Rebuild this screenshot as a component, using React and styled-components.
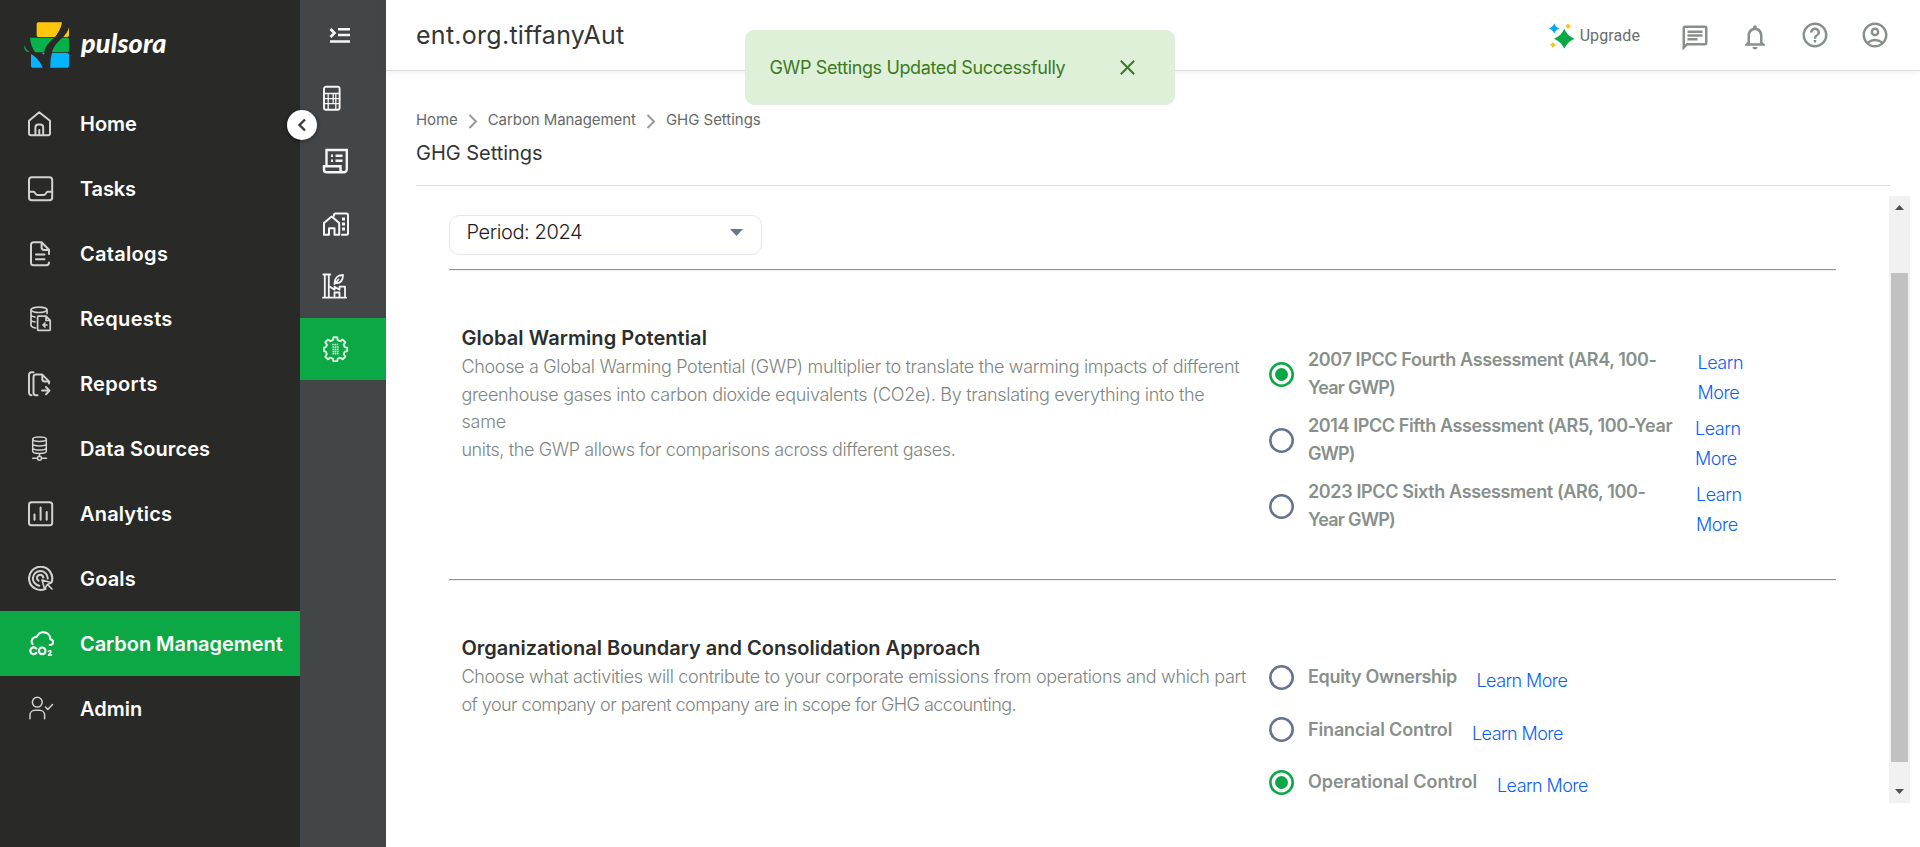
import React from "react";
import styled, { createGlobalStyle } from "styled-components";
import { MdOutlineChat, MdNotificationsNone, MdHelpOutline, MdOutlineAccountCircle } from "react-icons/md";

const Global = createGlobalStyle`
  *, *::before, *::after { box-sizing: border-box; }
  html, body { margin: 0; padding: 0; background: #fff; overflow: hidden; }
  body { font-family: Inter, "Liberation Sans", sans-serif; color: #2f3230; }
  h1, h2, h3, p { margin: 0; }
`;

const Page = styled.div`
  position: relative;
  display: flex;
  width: 1920px;
  height: 847px;
  overflow: hidden;
`;

const Sidebar = styled.aside`
  width: 300px;
  flex: none;
  background: #292927;
`;

const Brand = styled.div`
  display: flex;
  align-items: flex-start;
  height: 91px;
  padding: 21px 0 0 23px;
`;

const Wordmark = styled.span`
  margin: 4px 0 0 12px;
  font: italic 900 27px/36px Lato, sans-serif;
  letter-spacing: 0.15px;
  color: #fff;
`;

const NavItem = styled.a`
  display: flex;
  align-items: center;
  gap: 26px;
  height: 65px;
  padding-left: 28px;
  background: ${(p) => (p.$active ? "#0ca846" : "transparent")};
  color: ${(p) => (p.$active ? "#fff" : "#d2d2d1")};
  svg { flex: none; }
`;

const NavLabel = styled.span`
  color: #fff;
  font-weight: 600;
  font-size: 20px;
  line-height: 30px;
  white-space: nowrap;
  letter-spacing: ${(p) => p.$ls || 0}px;
`;

const Rail = styled.nav`
  width: 86px;
  flex: none;
  background: #434648;
  color: #f6f6f6;
`;

const RailTop = styled.div`
  height: 67px;
  padding: 25px 0 0 29px;
`;

const RailItem = styled.div`
  display: flex;
  align-items: center;
  height: 62.7px;
  padding-left: 22px;
  background: ${(p) => (p.$active ? "#0ca846" : "transparent")};
  color: ${(p) => (p.$active ? "#d3f0dd" : "inherit")};
`;

const Collapse = styled.button`
  position: absolute;
  left: 287px;
  top: 110px;
  width: 30px;
  height: 30px;
  padding: 0;
  border: 0;
  border-radius: 50%;
  background: #fff;
  box-shadow: 0 1px 4px rgba(0, 0, 0, 0.45);
  display: grid;
  place-items: center;
`;

const Main = styled.main`
  flex: 1;
  min-width: 0;
`;

const Header = styled.header`
  display: flex;
  align-items: flex-start;
  justify-content: space-between;
  height: 71px;
  padding: 0 30px;
  border-bottom: 1px solid #dcdce0;
  box-shadow: 0 2px 6px rgba(60, 60, 80, 0.07);
`;

const OrgName = styled.h1`
  padding-top: 17px;
  font-weight: 400;
  font-size: 25px;
  line-height: 36px;
  letter-spacing: 0.27px;
  color: #333634;
`;

const HeaderTools = styled.div`
  display: flex;
  align-items: flex-start;
  gap: 30px;
  padding-top: 20px;
  color: #87908b;
`;

const Upgrade = styled.div`
  display: flex;
  align-items: center;
  gap: 5px;
  margin-right: 10px;
  font: 400 16px/30px Roboto, sans-serif;
  letter-spacing: 0.1px;
  color: #6b6d6c;
  span { padding-top: 1px; }
`;

const ToolIcon = styled.span`
  display: flex;
  width: 30px;
  height: 30px;
  margin-top: ${(p) => p.$drop || 0}px;
`;

const Crumbs = styled.div`
  display: flex;
  align-items: center;
  height: 24px;
  margin: 37px 0 0 30px;
  font-size: 15px;
  line-height: 24px;
  color: #66696b;
  svg { margin: 2px 9.5px 0 10.5px; }
`;

const Crumb = styled.span`
  letter-spacing: ${(p) => p.$ls || 0}px;
  white-space: nowrap;
`;

const PageTitle = styled.h2`
  margin: 6px 0 0 30px;
  font-weight: 400;
  font-size: 20px;
  line-height: 30px;
  letter-spacing: -0.03px;
  color: #333634;
`;

const Divider = styled.div`
  width: 1474px;
  height: 1px;
  margin: 17px 0 10px 30px;
  background: #dddddd;
`;

const Body = styled.div`
  display: flex;
  height: 607px;
`;

const Content = styled.div`
  width: 1387px;
  margin: 19px 53px 0 63px;
  flex: none;
`;

const Select = styled.div`
  display: flex;
  justify-content: space-between;
  width: 313px;
  height: 40px;
  margin-bottom: 14px;
  padding: 1px 18px 0 16.5px;
  border: 1px solid #e6e6ee;
  border-radius: 10px;
  font-size: 20px;
  font-weight: 300;
  line-height: 30px;
  letter-spacing: -0.4px;
  color: #1d201f;
  svg { margin-top: 12px; }
`;

const Rule = styled.div`
  height: 2px;
  border-top: 1px solid #939393;
  border-bottom: 1px solid #eeeeee;
`;

const Section = styled.section`
  display: flex;
  height: ${(p) => p.$h || 220}px;
  padding-left: 12.4px;
`;

const Copy = styled.div`
  width: 807.6px;
  padding-top: 52px;
  flex: none;
`;

const Heading = styled.h3`
  font-weight: 600;
  font-size: 20px;
  line-height: 30px;
  letter-spacing: ${(p) => p.$ls || 0}px;
  color: #2b2e2c;
`;

const Line = styled.p`
  font-size: 18px;
  line-height: 27.7px;
  font-weight: 300;
  white-space: nowrap;
  letter-spacing: ${(p) => p.$ls || 0}px;
  color: #7d8580;
`;

const Options = styled.div`
  padding-top: 70px;
`;

const Option = styled.div`
  display: flex;
  align-items: center;
  height: ${(p) => p.$h}px;
`;

const Radio = styled.span`
  width: 25px;
  height: 25px;
  flex: none;
  border-radius: 50%;
  display: grid;
  place-items: center;
  box-shadow: inset 0 0 0 2.6px ${(p) => (p.$on ? "#0ca846" : "#66758f")};
  &::after {
    content: "";
    width: 13px;
    height: 13px;
    border-radius: 50%;
    background: ${(p) => (p.$on ? "#0ca846" : "transparent")};
  }
`;

const OptionLabel = styled.div`
  width: ${(p) => p.$w}px;
  margin: 0 20px 0 14px;
  font-weight: 600;
  font-size: 18px;
  line-height: 28px;
  color: #87908b;
  white-space: nowrap;
`;

const LabelLine = styled.span`
  display: table;
  letter-spacing: ${(p) => p.$ls || 0}px;
`;

const LearnMore = styled.a`
  padding-top: 8px;
  font-weight: 300;
  font-size: 18px;
  line-height: 30px;
  letter-spacing: ${(p) => p.$ls || 0}px;
  white-space: nowrap;
  color: #0d5ff5;
`;

const ScrollTrack = styled.div`
  display: flex;
  flex-direction: column;
  align-items: center;
  width: 21px;
  height: 607px;
  background: #f1f1f1;
`;

const ScrollArrow = styled.div`
  display: flex;
  align-items: ${(p) => (p.$up ? "flex-start" : "flex-end")};
  height: ${(p) => (p.$up ? 77 : 41)}px;
  padding: 9px 0;
`;

const ScrollThumb = styled.div`
  width: 17px;
  flex: 1;
  background: #c1c1c1;
`;

const Toast = styled.div`
  position: absolute;
  left: 745px;
  top: 30px;
  display: flex;
  align-items: center;
  justify-content: space-between;
  width: 430px;
  height: 75px;
  padding: 0 40px 0 24.5px;
  border-radius: 9px;
  background: #dff0d9;
  color: #3b7a1e;
  font-size: 18px;
  letter-spacing: -0.37px;
`;

const Logo = () => (
  <svg width="46" height="48" viewBox="69 63 138 144">
    <path fill="#ffc60b" d="M110 72q0-5 5-5h71c-3 18-10 30-21 44h-50q-5 0-5-5zM207 82v24q0 5-5 5h-12c8-10 15-18 17-29z" />
    <path fill="#06b14c" d="M90 113h73c-16 12-26 25-31 44h-26c-10-12-15-28-16-44zM188 113h14q5 0 5 5v34q0 5-5 5h-46c4-17 16-32 32-44zM72 134c4 10 9 16 16 22-11 1-16-8-16-22z" />
    <path fill="#04b4ff" d="M93 162c17 9 29 25 35 41H98q-5 0-5-5zM156 159h46q5 0 5 5v34q0 5-5 5h-51c0-17 1-32 5-44zM125 158h9l-3 6z" />
  </svg>
);

const Icon = ({ children, sw = 2, w = 26, h = 26 }) => (
  <svg width={w} height={h} viewBox={`0 0 ${w} ${h}`} fill="none" stroke="currentColor" strokeWidth={sw} strokeLinecap="round" strokeLinejoin="round">
    {children}
  </svg>
);

const icons = {
  home: (
    <Icon><path d="M1 9.800 11.200 1.300 22 9.800V22.300a2 2 0 0 1-2 2H3a2 2 0 0 1-2-2zM7.400 24v-7.400a3 3 0 0 1 3-3h1.800a3 3 0 0 1 3 3V24M11.300 19v5" /></Icon>
  ),
  tasks: (
    <Icon><rect x="1" y="1.200" width="23.200" height="23" rx="2.800" /><path d="M1 15.800h4.600c1.600 0 1.600 3.200 4 3.200h6c2.400 0 2.400-3.200 4-3.200h4.600" /></Icon>
  ),
  catalogs: (
    <Icon><path d="M21 21.600c0 1.600-1 2.700-2.600 2.700H5.600A2.600 2.600 0 0 1 3 21.700V3.800a2.600 2.600 0 0 1 2.600-2.600h8L21 8.700v4.300M13.600 1.500v5a2.400 2.400 0 0 0 2.400 2.400h5M8 13.600h8.500M8 18.300h8.500" /></Icon>
  ),
  requests: (
    <Icon sw={1.7}>
      <ellipse cx="11" cy="3.800" rx="8" ry="2.700" /><path d="M3 4v15c0 1.500 2 2.500 4.500 3M19 4v3.500M3 9.500c1 1 2.300 1.300 4 1.500M3 14.500c1 1 2.300 1.300 4 1.500" />
      <path d="M10.600 10.200h7.400l4.200 4.200v9a1 1 0 0 1-1 1H10.600a1 1 0 0 1-1-1V11.200a1 1 0 0 1 1-1zM18 10.500v4h4M15 19h4M17 17l-2 2 2 2" />
    </Icon>
  ),
  reports: (
    <Icon><path d="M5.500 1.200H3.500a2.500 2.500 0 0 0-2.500 2.500v18a2.500 2.500 0 0 0 2.500 2.500M9.500 24.200H8a2.500 2.500 0 0 1-2.500-2.500V6A2.500 2.500 0 0 1 8 3.600h6.300l6.700 6.800v2M14.300 4v4a2.400 2.400 0 0 0 2.400 2.400h4.500M14 19.600h7.300M18 16l3.500 3.600L18 23.200" /></Icon>
  ),
  sources: (
    <Icon sw={1.5}>
      <ellipse cx="11.500" cy="3.300" rx="6.800" ry="2.200" /><path d="M4.700 3.300v12c0 1.300 3 2.200 6.800 2.200s6.800-.9 6.800-2.200v-12M4.700 8.200c1 1.100 3.500 1.700 6.800 1.700s5.800-.6 6.800-1.700M4.700 12.500c1 1.100 3.500 1.500 6.800 1.500s5.800-.4 6.800-1.500M11.500 17.500v3" />
      <circle cx="11.500" cy="22.300" r="2" /><path d="M4.700 22.300h4.500M13.700 22.300h4.800" />
    </Icon>
  ),
  analytics: (
    <Icon><rect x="1" y="1.200" width="23.200" height="23" rx="2.500" /><path d="M6.500 13.500v5.200M12.600 6.500v12.200M18.700 11v7.700" /></Icon>
  ),
  goals: (
    <Icon sw={2.1}>
      <path d="M17.500 22.900a11.600 11.600 0 1 1 6.200-7M11.200 19.700a7.400 7.400 0 1 1 8.500-7.200M10.500 14.700a3.200 3.200 0 1 1 4.800-3.200" />
      <path d="M14 14l9.500 2.800-4 1.800 4.500 4.400M14 14l2.700 9.300 2-4.300" strokeWidth="1.600" />
    </Icon>
  ),
  carbon: (
    <Icon>
      <path d="M4.600 13.200a4.400 4.400 0 0 1 1.200-6.600c1-.5 2-.6 2.900-.8C10 2.800 12.500 1.200 15.500 1.200c4 0 6.700 3 6.700 6.800 2 .7 3.300 2 3 3.700-.3 1.800-1.800 2.400-3.500 2.400" />
      <path d="M8.300 17.500a3.400 3.400 0 1 0 0 4.500" strokeWidth="2.200" /><circle cx="14.200" cy="19.800" r="3.300" strokeWidth="2.200" /><path d="M20.500 20.400c.8-1.200 3-.6 2.400.8l-2.400 2.700h3" strokeWidth="1.500" />
    </Icon>
  ),
  admin: (
    <Icon sw={1.5}><circle cx="9.300" cy="6.200" r="4.900" /><path d="M2 22.700v-3.600a4.800 4.800 0 0 1 4.800-4.800h5a4.800 4.800 0 0 1 4.800 4.800v3.600M17.500 11l2.300 2.500L24.500 8.500" /></Icon>
  ),
};

const railIcons = {
  calc: (
    <Icon w={28}><rect x="2" y="1.800" width="15.600" height="23" rx="2" strokeWidth="1.900" /><path d="M2 8.500h15.600M2 13.700h15.600M2 18.700h15.600M6.200 8.300v16M11.200 8.300v10.200M13.800 8.300v16" strokeWidth="1.300" /></Icon>
  ),
  receipt: (
    <Icon w={28} sw={2.4}><path d="M4.500 17.500V2h20.300v19.300a3 3 0 0 1-3 3H4.300A2.500 2.500 0 0 1 2 21.800v-3.500h16.500v3.500a2.500 2.500 0 0 0 2.500 2.500" strokeLinejoin="miter" /><path d="M9 7.800h2M13.500 7.800h7M9 12.800h2M13.500 12.800h7" strokeWidth="2.600" strokeLinecap="butt" /></Icon>
  ),
  homework: (
    <Icon w={28} sw={2}><path d="M2 12 9.700 5.500l7.500 6.500v11.800h-4.700v-6.500H7v6.500H2zM12 4.700V4a1.500 1.500 0 0 1 1.500-1.500h11A1.500 1.500 0 0 1 26 4v18.300a1.500 1.500 0 0 1-1.500 1.500H20" /><path d="M20 8h3M20 13h3M20 18h3" strokeWidth="2.800" strokeLinecap="butt" /></Icon>
  ),
  factory: (
    <Icon w={28} sw={1.8}><path d="M1.300 1.500h7M2.800 1.500v23M6.800 1.500v23M1 24.700h23M8 13.700l4.500 3v-3l5 3v-3h5.500v11M12.500 24.500v-5h5v5" /><path d="M12.500 11c0-6 3-9 8.500-9 0 5.500-2.500 8.300-6.500 8M12.500 11l4-4.500" /></Icon>
  ),
  gear: (
    <Icon w={28} sw={2}>
      <path d="M11.500 1.300h3.600l.7 2.900 2.300 1 2.600-1.600 2.600 2.600-1.600 2.600 1 2.300 2.500.6v3.400l-2.500.7-1 2.300 1.600 2.600-2.600 2.600-2.600-1.600-2.300 1-.7 2.600h-3.600l-.7-2.600-2.300-1-2.600 1.600-2.600-2.600 1.600-2.600-1-2.300L2 15.100v-3.400l1.900-.6 1-2.300-1.600-2.600 2.600-2.600 2.600 1.600 2.300-1z" />
      <path d="M10.200 8.500h6.200M10.500 11h6M10.500 13.200h6M10.500 15.400h6M10.500 17.600h6" strokeWidth="1.600" strokeLinecap="butt" strokeDasharray="1.600 .6" />
    </Icon>
  ),
};

const Sparkle = () => (
  <svg width="26" height="26" viewBox="0 0 26 26">
    <path fill="#0ca846" d="M15.300 5.700c2.800 5.500 4.600 7.300 10.300 10-5.700 2.700-7.500 4.500-10.300 10-2.800-5.500-4.600-7.300-10.300-10 5.700-2.700 7.500-4.500 10.300-10z" />
    <path fill="#04a9f4" d="M5.200.3c1.300 3 2.200 3.900 5.200 5.200-3 1.300-3.900 2.200-5.200 5.200C3.900 7.700 3 6.800 0 5.500c3-1.300 3.900-2.200 5.200-5.200z" />
    <path fill="#fbc012" stroke="#fbc012" strokeWidth="1" d="M19 1l.8 1.500 1.500.8-1.500.8L19 5.600l-.8-1.500-1.500-.8 1.500-.8zM3.900 19.600l.8 1.500 1.500.8-1.500.8-.8 1.500-.8-1.500-1.500-.8 1.500-.8z" />
  </svg>
);

const Chevron = () => (
  <svg width="10" height="15" viewBox="0 0 10 15" fill="none" stroke="#999" strokeWidth="2"><path d="M1.500 1l6.500 6.500-6.500 6.500" /></svg>
);

const NAV = [
  { label: "Home", icon: "home", ls: 0 },
  { label: "Tasks", icon: "tasks", ls: -0.15 },
  { label: "Catalogs", icon: "catalogs", ls: 0.3 },
  { label: "Requests", icon: "requests", ls: 0.33 },
  { label: "Reports", icon: "reports", ls: 0.33 },
  { label: "Data Sources", icon: "sources", ls: 0.1 },
  { label: "Analytics", icon: "analytics", ls: 0.17 },
  { label: "Goals", icon: "goals", ls: 0.15 },
  { label: "Carbon Management", icon: "carbon", ls: -0.05 },
  { label: "Admin", icon: "admin", ls: -0.02 },
];

const GWP = [
  { on: true, w: 369.5, lines: [["2007 IPCC Fourth Assessment (AR4, 100-", -0.383], ["Year GWP)", -0.79]] },
  { w: 367, lines: [["2014 IPCC Fifth Assessment (AR5, 100-Year", -0.4], ["GWP)", -0.92]] },
  { w: 368, lines: [["2023 IPCC Sixth Assessment (AR6, 100-", -0.362], ["Year GWP)", -0.79]] },
];

const BOUNDARY = [
  { label: "Equity Ownership", w: 148.5, ls: -0.333 },
  { label: "Financial Control", w: 144, ls: -0.13 },
  { label: "Operational Control", w: 169, ls: -0.03, on: true },
];

export default function App() {
  return (
    <Page>
      <Global />
      <Sidebar>
        <Brand><Logo /><Wordmark>pulsora</Wordmark></Brand>
        {NAV.map(({ label, icon, ls }) => (
          <NavItem key={label} $active={icon === "carbon"}>{icons[icon]}<NavLabel $ls={ls}>{label}</NavLabel></NavItem>
        ))}
      </Sidebar>
      <Rail>
        <RailTop>
          <svg width="22" height="20" viewBox="0 0 22 20" fill="none" stroke="currentColor" strokeWidth="2.600"><path d="M1.500 4l4 4-4 4M9 4.300H21M9 10H21M1 16.500h20" /></svg>
        </RailTop>
        {Object.entries(railIcons).map(([k, icon]) => <RailItem key={k} $active={k === "gear"}>{icon}</RailItem>)}
      </Rail>
      <Main>
        <Header>
          <OrgName>ent.org.tiffanyAut</OrgName>
          <HeaderTools>
            <Upgrade><Sparkle /><span>Upgrade</span></Upgrade>
            <ToolIcon $drop={3}><MdOutlineChat size={30} /></ToolIcon>
            <ToolIcon $drop={2}><MdNotificationsNone size={30} /></ToolIcon>
            <ToolIcon><MdHelpOutline size={30} /></ToolIcon>
            <ToolIcon><MdOutlineAccountCircle size={30} /></ToolIcon>
          </HeaderTools>
        </Header>
        <Crumbs>
          <Crumb $ls={-0.08}>Home</Crumb><Chevron />
          <Crumb $ls={-0.07}>Carbon Management</Crumb><Chevron />
          <Crumb $ls={-0.03}>GHG Settings</Crumb>
        </Crumbs>
        <PageTitle>GHG Settings</PageTitle>
        <Divider />
        <Body>
          <Content>
            <Select>
              <span>Period: 2024</span>
              <svg width="13" height="7" viewBox="0 0 13 7"><path d="M0 0h13L6.500 7z" fill="#6b7786" /></svg>
            </Select>
            <Rule />
            <Section $h={308}>
              <Copy>
                <Heading $ls={0.08}>Global Warming Potential</Heading>
                <Line $ls={-0.325}>Choose a Global Warming Potential (GWP) multiplier to translate the warming impacts of different</Line>
                <Line $ls={-0.305}>greenhouse gases into carbon dioxide equivalents (CO2e). By translating everything into the</Line>
                <Line $ls={-0.2}>same</Line>
                <Line $ls={-0.38}>units, the GWP allows for comparisons across different gases.</Line>
              </Copy>
              <Options>
                {GWP.map((o) => (
                  <Option key={o.lines[0][0]} $h={66}>
                    <Radio $on={o.on} />
                    <OptionLabel $w={o.w}>{o.lines.map(([text, ls]) => <LabelLine key={text} $ls={ls}>{text}</LabelLine>)}</OptionLabel>
                    <LearnMore $ls={-0.45}>Learn<br />More</LearnMore>
                  </Option>
                ))}
              </Options>
            </Section>
            <Rule />
            <Section>
              <Copy>
                <Heading>Organizational Boundary and Consolidation Approach</Heading>
                <Line $ls={-0.318}>Choose what activities will contribute to your corporate emissions from operations and which part</Line>
                <Line $ls={-0.525}>of your company or parent company are in scope for GHG accounting.</Line>
              </Copy>
              <Options>
                {BOUNDARY.map((o) => (
                  <Option key={o.label} $h={52.5}>
                    <Radio $on={o.on} />
                    <OptionLabel $w={o.w}><LabelLine $ls={o.ls}>{o.label}</LabelLine></OptionLabel>
                    <LearnMore $ls={-0.56}>Learn More</LearnMore>
                  </Option>
                ))}
              </Options>
            </Section>
          </Content>
          <ScrollTrack>
            <ScrollArrow $up><svg width="9" height="5"><path d="M0 5h9L4.500 0z" fill="#505050" /></svg></ScrollArrow>
            <ScrollThumb />
            <ScrollArrow><svg width="9" height="5"><path d="M0 0h9L4.500 5z" fill="#505050" /></svg></ScrollArrow>
          </ScrollTrack>
        </Body>
      </Main>
      <Collapse><svg width="10" height="14" viewBox="0 0 10 14" fill="none" stroke="#3b3d3e" strokeWidth="2.400"><path d="M8 1.500 2.500 7 8 12.500" /></svg></Collapse>
      <Toast>
        <span>GWP Settings Updated Successfully</span>
        <svg width="15" height="15" viewBox="0 0 15 15" stroke="#3b7a1e" strokeWidth="2"><path d="M.8.800l13.400 13.400M14.200.800.800 14.200" /></svg>
      </Toast>
    </Page>
  );
}
